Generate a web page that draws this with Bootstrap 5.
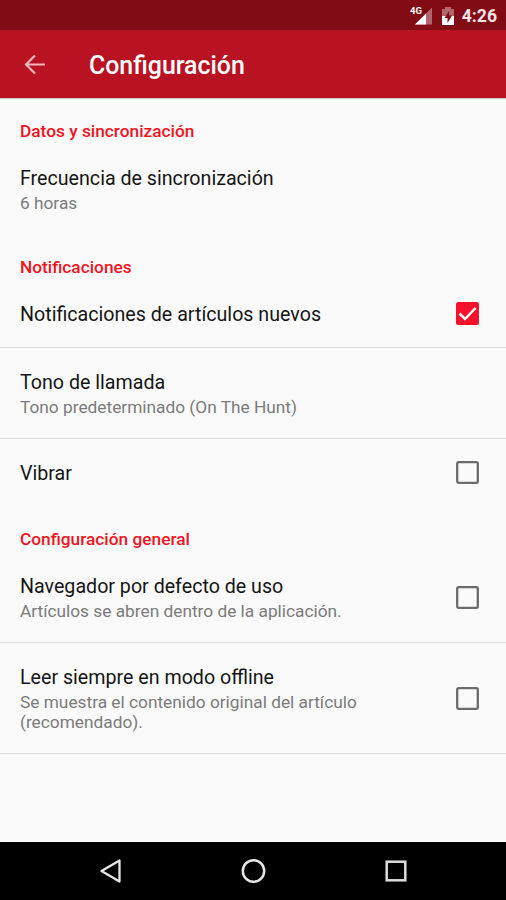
<!DOCTYPE html>
<html lang="es">
<head>
<meta charset="utf-8">
<meta name="viewport" content="width=device-width, initial-scale=1">
<title>Configuración</title>
<link href="https://cdn.jsdelivr.net/npm/bootstrap@5.3.0/dist/css/bootstrap.min.css" rel="stylesheet">
<style>
body{font-family:Roboto,"Liberation Sans",sans-serif;background:#fafafa;width:506px;height:900px;overflow:hidden}
svg{display:block;flex:none}
.status{height:30px;background:#810c16;font-size:17.6px;font-weight:700;color:#f7e3e5;line-height:30px;padding:1px 9px 0 0;gap:7px}
.appbar{height:68px;background:#b91222;padding:2px 0 0 24px;box-shadow:0 1px 1px #0003;z-index:1}
.appbar h1{font-size:24.9px;font-weight:500;color:#fff;margin:2px 0 0 41px;line-height:30px}
.cat{height:47px;padding:23px 20px 0;font-size:17.3px;line-height:20px;font-weight:500;color:#f0141e;margin:0}
.cat.second{padding-top:24px}
.cat.mid{height:46px}
.pref{padding:0 27px 0 20px;height:91px}
.pref.top{height:88px}
.pref.one{height:68px}
.pref.plain{height:67px}
.pref.three{height:111px}
.line{border-bottom:1px solid #dcdcdc}
.name{font-size:19.65px;line-height:24px;color:#151515;padding-top:2px}
.info{font-size:17.3px;line-height:20px;color:#7b7b7b;padding-top:2px;margin-bottom:1px}
.navkeys{height:58px;background:#000;padding:0 98px 0 99px}
</style>
<script src="https://cdn.jsdelivr.net/npm/bootstrap@5.3.0/dist/js/bootstrap.bundle.min.js"></script>
</head>
<body class="d-flex flex-column">
<div class="status d-flex align-items-center justify-content-end">
  <svg width="24" height="24" viewBox="0 0 24 24"><path d="M22 3.500v17H5z" fill="#b4666d"/><path d="M16 9.500v11H5z" fill="#fff"/><text x="0" y="10" font-size="9.500" font-weight="700" fill="#fff" stroke="#810c16" stroke-width="1.500" paint-order="stroke">4G</text></svg>
  <svg width="14" height="20" viewBox="0 0 14 20"><path d="M1 3h3V1h6v2h3v16H1z" fill="#b4666d"/><path d="M1 10h12v9H1z" fill="#fff"/><path d="M8 5L3.500 12h3v5L11 9.500H8z" fill="#810c16"/></svg>
  <span>4:26</span>
</div>
<header class="appbar d-flex align-items-center position-relative">
  <svg width="24" height="22" viewBox="0 0 24 22"><path d="M21 10.500H3M11 1.500l-9 9 9 9" fill="none" stroke="#f2b5b9" stroke-width="2.200"/></svg>
  <h1>Configuración</h1>
</header>
<main class="flex-grow-1">
  <h2 class="cat">Datos y sincronización</h2>
  <div class="pref top d-flex align-items-center"><div><div class="name">Frecuencia de sincronización</div><div class="info">6 horas</div></div></div>
  <h2 class="cat second">Notificaciones</h2>
  <div class="pref one line d-flex align-items-center justify-content-between"><div class="name">Notificaciones de artículos nuevos</div>
    <svg width="23" height="23" viewBox="0 0 23 23"><rect width="23" height="23" rx="2.500" fill="#f8112a"/><path d="M3.500 11.500l5.500 5.500L19.500 6" fill="none" stroke="#fff" stroke-width="2.500"/></svg></div>
  <div class="pref line d-flex align-items-center"><div><div class="name">Tono de llamada</div><div class="info">Tono predeterminado (On The Hunt)</div></div></div>
  <div class="pref one plain d-flex align-items-center justify-content-between"><div class="name">Vibrar</div>
    <svg width="23" height="23" viewBox="0 0 23 23"><rect x="1.200" y="1.200" width="20.600" height="20.600" rx="1.500" fill="none" stroke="#6b6b6b" stroke-width="2.300"/></svg></div>
  <h2 class="cat mid">Configuración general</h2>
  <div class="pref line d-flex align-items-center justify-content-between"><div><div class="name">Navegador por defecto de uso</div><div class="info">Artículos se abren dentro de la aplicación.</div></div>
    <svg width="23" height="23" viewBox="0 0 23 23"><rect x="1.200" y="1.200" width="20.600" height="20.600" rx="1.500" fill="none" stroke="#6b6b6b" stroke-width="2.300"/></svg></div>
  <div class="pref three line d-flex align-items-center justify-content-between"><div><div class="name">Leer siempre en modo offline</div><div class="info">Se muestra el contenido original del artículo<br>(recomendado).</div></div>
    <svg width="23" height="23" viewBox="0 0 23 23"><rect x="1.200" y="1.200" width="20.600" height="20.600" rx="1.500" fill="none" stroke="#6b6b6b" stroke-width="2.300"/></svg></div>
</main>
<footer class="navkeys d-flex align-items-center justify-content-between">
  <svg width="24" height="26" viewBox="0 0 24 26"><path d="M20.500 2.500v21L2.500 13z" fill="none" stroke="#e6e6e6" stroke-width="2.300" stroke-linejoin="round"/></svg>
  <svg width="26" height="26" viewBox="0 0 26 26"><circle cx="12.500" cy="13" r="10.700" fill="none" stroke="#e6e6e6" stroke-width="2.500"/></svg>
  <svg width="24" height="24" viewBox="0 0 24 24"><rect x="2.700" y="2.700" width="18.600" height="18.600" fill="none" stroke="#dcdcdc" stroke-width="2.500"/></svg>
</footer>
</body>
</html>
